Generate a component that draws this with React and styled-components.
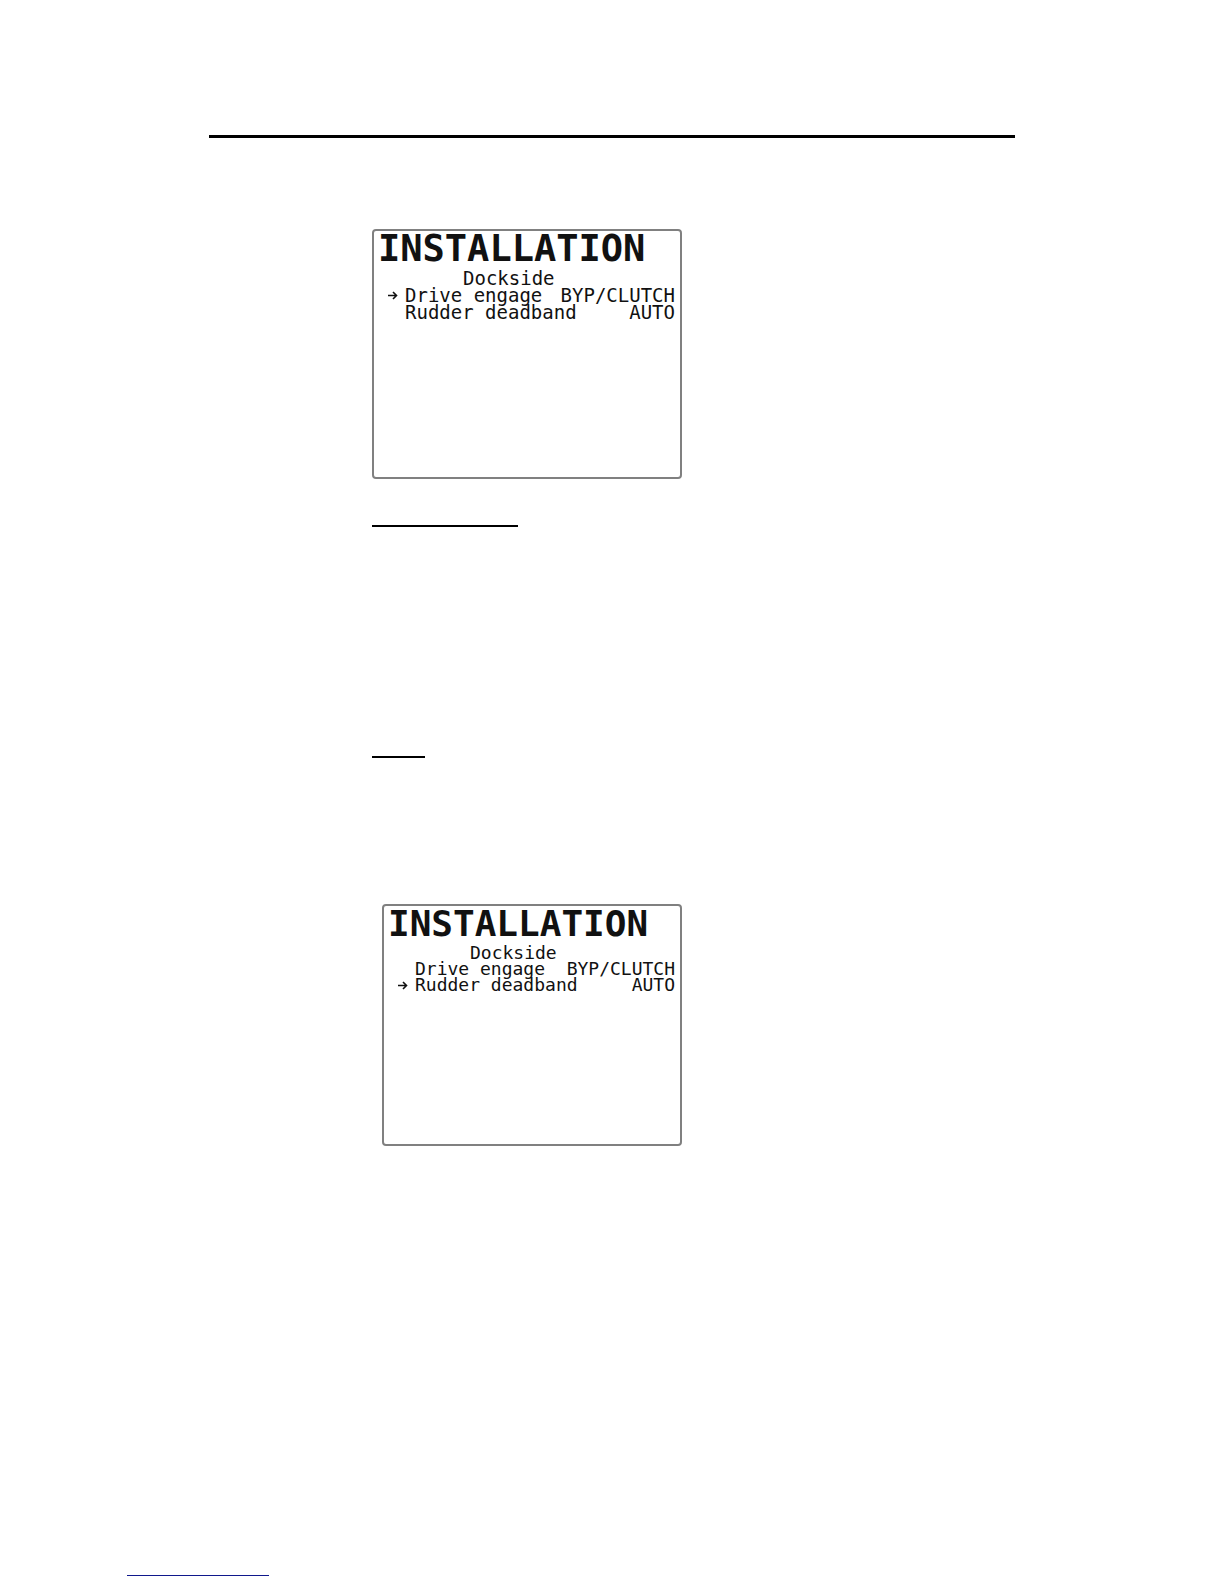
import styled, { createGlobalStyle } from "styled-components";

const MENU = [
  { label: "Drive engage", value: "BYP/CLUTCH" },
  { label: "Rudder deadband", value: "AUTO" },
];

const MenuScreen = ({ compact, selected }) => {
  return (
    <Screen $compact={compact}>
      <Title $compact={compact}>INSTALLATION</Title>
      <Subtitle $compact={compact}>Dockside</Subtitle>
      <MenuList>
        {MENU.map(({ label, value }) => (
          <MenuItem key={label}>
            <Marker>{label === selected && <Arrow />}</Marker>
            <Label>{label}</Label>
            <Value>{value}</Value>
          </MenuItem>
        ))}
      </MenuList>
    </Screen>
  );
};

const Arrow = () => (
  <svg width="10" height="9" viewBox="0 0 10 9" aria-hidden="true">
    <path
      d="M0 4.5H8.5M5 1L8.5 4.5L5 8"
      fill="none"
      stroke="#111"
      strokeWidth="1.6"
    />
  </svg>
);

const App = () => {
  return (
    <>
      <GlobalStyle />
      <Page>
        <Sheet>
          <HeaderRule />
          <Content>
            <MenuScreen selected="Drive engage" />
            <Section>
              <HeadingRule $width="146px" />
            </Section>
            <Section $last>
              <HeadingRule $width="53px" />
            </Section>
            <MenuScreen compact selected="Rudder deadband" />
          </Content>
        </Sheet>
        <Footer>
          <FooterRule />
        </Footer>
      </Page>
    </>
  );
};

export default App;

const GlobalStyle = createGlobalStyle`
  * {
    box-sizing: border-box;
  }

  body {
    margin: 0;
    background-color: #fff;
  }
`;
const Page = styled.div`
  min-height: 100vh;
  display: flex;
  flex-direction: column;
  padding-top: 135px;
`;
const Sheet = styled.main`
  width: 100%;
  max-width: 806px;
  margin: 0 auto;
  flex: 1;
`;
const HeaderRule = styled.hr`
  margin: 0;
  border: 0;
  border-top: 3px solid #000;
`;
const Content = styled.div`
  width: fit-content;
  margin-left: 163px;
  padding-top: 91px;
`;
const Screen = styled.section`
  width: ${({ $compact }) => ($compact ? "300px" : "310px")};
  min-height: ${({ $compact }) => ($compact ? "242px" : "250px")};
  margin-left: auto;
  padding: 1px 5px 0 3px;
  border: 2px solid #808080;
  border-radius: 4px;
  color: #111;
  font-family: "DejaVu Sans Mono", monospace;
  font-size: ${({ $compact }) => ($compact ? "18px" : "19px")};
  line-height: ${({ $compact }) => ($compact ? "16px" : "17px")};
  white-space: nowrap;
`;
const Title = styled.h2`
  margin: 0;
  padding-left: 1px;
  font-size: ${({ $compact }) => ($compact ? "36px" : "37px")};
  font-weight: 700;
  line-height: 34px;
`;
const Subtitle = styled.h3`
  margin: 4px 0 0;
  padding-left: ${({ $compact }) => ($compact ? "83px" : "86px")};
  font-size: inherit;
  font-weight: 400;
`;
const MenuList = styled.ul`
  margin: 0;
  padding: 0;
  list-style: none;
`;
const MenuItem = styled.li`
  display: flex;
`;
const Marker = styled.span`
  width: 28px;
  display: flex;
  align-items: center;
  padding-left: 11px;
`;
const Label = styled.span``;
const Value = styled.span`
  margin-left: auto;
`;
const Section = styled.section`
  padding-top: 46px;
  min-height: ${({ $last }) => ($last ? "194px" : "231px")};
`;
const HeadingRule = styled.hr`
  width: ${({ $width }) => $width};
  margin: 0;
  border: 0;
  border-top: 2px solid #000;
`;
const Footer = styled.footer`
  padding: 0 0 8px 127px;
`;
const FooterRule = styled.hr`
  width: 142px;
  margin: 0;
  border: 0;
  border-top: 1px solid #10188c;
`;
